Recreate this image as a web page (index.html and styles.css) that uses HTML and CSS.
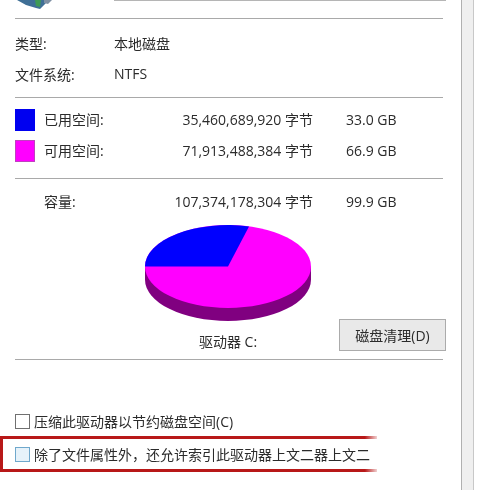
FILE: index.html
```html
<!DOCTYPE html>
<html lang="zh-CN">
<head>
    <meta charset="UTF-8">
    <title>本地磁盘 属性</title>
    <link rel="stylesheet" href="styles.css">
</head>
<body>
    <div class="window">
        <div class="panel">
            <div class="section head">
                <svg class="drive-icon" width="40" height="10" viewBox="0 0 40 10">
                    <path d="M2 0 H36 L31 3 L25 9 L21 8 L11 5 Z" fill="#3f6f96"/>
                    <path d="M20 0 H26 L25 7 L21 6 Z" fill="#3f9a55"/>
                    <path d="M29 0 H37 L33 4 L29 3 Z" fill="#7e8fa3"/>
                </svg>
                <div class="name-box"></div>
            </div>

            <div class="section info">
                <div class="info-row"><span>类型:</span><span>本地磁盘</span></div>
                <div class="info-row"><span>文件系统:</span><span>NTFS</span></div>
            </div>

            <div class="section usage">
                <div class="usage-row">
                    <i class="swatch used"></i>
                    <span>已用空间:</span>
                    <span class="bytes">35,460,689,920 字节</span>
                    <span>33.0 GB</span>
                </div>
                <div class="usage-row">
                    <i class="swatch free"></i>
                    <span>可用空间:</span>
                    <span class="bytes">71,913,488,384 字节</span>
                    <span>66.9 GB</span>
                </div>
            </div>

            <div class="section chart">
                <div class="usage-row total">
                    <i class="swatch"></i>
                    <span>容量:</span>
                    <span class="bytes">107,374,178,304 字节</span>
                    <span>99.9 GB</span>
                </div>
                <div class="chart-row">
                    <div class="pie-box">
                        <svg width="166" height="96" viewBox="0 0 166 96">
                            <path d="M0 41.5 V54.5 A83 41.5 0 0 0 166 54.5 V41.5 Z" fill="#800080"/>
                            <ellipse cx="83" cy="41.5" rx="83" ry="41.5" fill="#ff00ff"/>
                            <path d="M83 41.5 H0 A83 41.5 0 0 1 104 1.4 Z" fill="#0000ff"/>
                        </svg>
                        <div class="caption">驱动器 C:</div>
                    </div>
                    <button class="clean">磁盘清理(D)</button>
                </div>
            </div>

            <label class="check-row">
                <i class="box"></i>
                <span>压缩此驱动器以节约磁盘空间(C)</span>
            </label>
            <label class="check-row marked">
                <i class="box hot"></i>
                <span>除了文件属性外，还允许索引此驱动器上文二器上文二</span>
            </label>
        </div>
        <div class="strip"></div>
    </div>
</body>
</html>
```

FILE: styles.css
```css
:root {
    --rule: #a9a9a9;
    --text: #2b2b2b;
}

body {
    margin: 0;
    width: 482px;
    height: 490px;
    overflow: hidden;
    background-color: white;
    color: var(--text);
    font-family: 'Open Sans', 'Noto Sans CJK SC', sans-serif;
    font-size: 14px;
}

.window {
    display: flex;
    height: 490px;
    filter: blur(0.35px);
}

.panel {
    width: 428px;
    padding: 0 18px 0 15px;
    border-right: 1px solid #b0b0b0;
}

.strip {
    width: 11px;
    background-color: #efefef;
    border-right: 1px solid #c8c8c8;
}

.section {
    border-bottom: 1px solid var(--rule);
}

.head {
    display: flex;
    justify-content: space-between;
    height: 18px;
}

.drive-icon {
    display: block;
}

.name-box {
    width: 332px;
    height: 1px;
    margin-right: -3px;
    background-color: #b5b5b5;
}

.info {
    height: 70px;
    padding-top: 8px;
}

.info-row {
    display: grid;
    grid-template-columns: 99px 1fr;
    height: 31px;
    align-items: center;
}

.usage {
    height: 69px;
    padding-top: 11px;
}

.usage-row {
    display: grid;
    grid-template-columns: 29px 100px 169px 1fr;
    align-items: center;
    height: 22px;
    margin-bottom: 9px;
}

.usage-row span {
    padding-bottom: 2px;
}

.bytes {
    text-align: right;
}

.usage-row span:last-child {
    padding-left: 33px;
}

.swatch {
    display: block;
    width: 20px;
    height: 22px;
}

.used {
    background-color: #0000f0;
}

.free {
    background-color: #ff00ff;
    box-shadow: inset 0 0 0 1px #c040c0;
}

.chart {
    height: 168px;
    padding-top: 12px;
    margin-bottom: 50px;
}

.total {
    margin-bottom: 12px;
}

.chart-row {
    display: flex;
    justify-content: space-between;
    margin-right: -3px;
    height: 122px;
}

.pie-box {
    width: 166px;
    margin-left: 130px;
    text-align: center;
}

.pie-box svg {
    display: block;
}

.caption {
    margin-top: 10px;
}

.clean {
    width: 107px;
    height: 32px;
    margin-top: 94px;
    padding: 0;
    background-color: #e9e9e9;
    border: 1px solid #ababab;
    color: var(--text);
    font: inherit;
}

.check-row {
    display: flex;
    align-items: center;
    gap: 4px;
    height: 22px;
    white-space: nowrap;
}

.box {
    width: 13px;
    height: 13px;
    border: 1px solid #707070;
    background-color: white;
}

.marked {
    width: 362px;
    height: 30px;
    margin: 4px 0 0 -15px;
    padding-left: 12px;
    border: solid 3px;
    border-right: 0;
    border-image: linear-gradient(to right, #b81818 96%, rgba(184, 24, 24, 0)) 3;
}

.hot {
    background-color: #e6f2fa;
    border-color: #6fa8cc;
}
```
